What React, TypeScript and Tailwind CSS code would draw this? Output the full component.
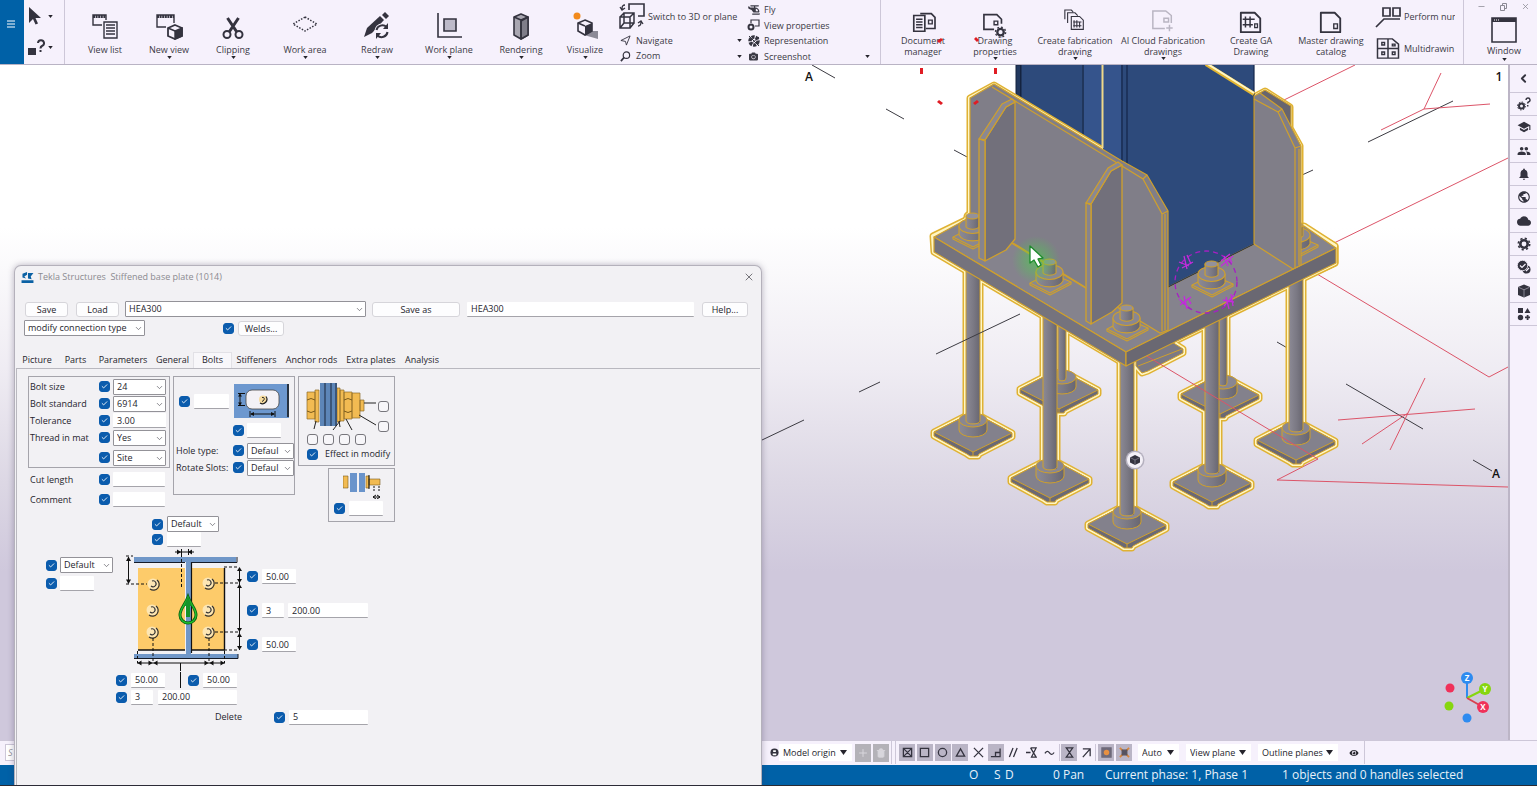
import React from "react";
import { MdSchool, MdGroup, MdNotifications, MdPublic, MdCloud, MdSettings } from "react-icons/md";
import { FaHelicopter, FaCamera, FaEye } from "react-icons/fa";
import { ChevronDown, ChevronLeft, Check, X, Minus, Trash2, Plus } from "lucide-react";

/* ---------- small shared controls ---------- */

function Arrow({ className = "" }: { className?: string }) {
  return (
    <svg viewBox="0 0 6 4" className={"h-[3px] w-[5px] fill-[#25242c] " + className}>
      <path d="M0 0h6L3 4z" />
    </svg>
  );
}

function Tick({ label, on = true }: { label: string; on?: boolean }) {
  return (
    <span className="grid h-[11px] w-[11px] shrink-0">
      <input
        type="checkbox"
        aria-label={label}
        defaultChecked={on}
        className="peer col-start-1 row-start-1 h-[11px] w-[11px] appearance-none rounded-[3px] border border-[#77767c] bg-[#f7f6f9] checked:border-[#0b5cad] checked:bg-[#0b5cad]"
      />
      <Check
        className="pointer-events-none col-start-1 row-start-1 m-auto hidden h-[7px] w-[7px] text-white peer-checked:block"
        strokeWidth={3}
      />
    </span>
  );
}

function Field({ label, value = "", className }: { label: string; value?: string; className: string }) {
  return (
    <input
      type="text"
      aria-label={label}
      defaultValue={value}
      className={"h-[15px] shrink-0 rounded-[1px] border-b border-[#a5a4aa] bg-white px-[4px] outline-none " + className}
    />
  );
}

function Pick({ label, value, className }: { label: string; value: string; className: string }) {
  return (
    <span className={"relative flex h-[16px] shrink-0 " + className}>
      <select
        aria-label={label}
        className="w-full appearance-none rounded-[1px] border border-[#939298] bg-white pl-[3px] outline-none"
      >
        <option>{value}</option>
      </select>
      <ChevronDown className="pointer-events-none absolute top-[4px] right-[2px] h-[9px] w-[9px] text-[#55545c]" strokeWidth={1.8} />
    </span>
  );
}

function PushButton({ children, className }: { children: string; className: string }) {
  return (
    <button type="button" className={"h-[15px] rounded-[3px] border border-[#d6d5da] bg-[#fdfdfe] text-center leading-[13px] " + className}>
      {children}
    </button>
  );
}

/* ---------- ribbon ---------- */

const ink = "#34333f";

const DocBase = () => <path d="M2 3h15l6 6v15H2z" fill="none" stroke={ink} strokeWidth="2" strokeLinejoin="round" />;

const icons: Record<string, React.ReactNode> = {
  viewList: (
    <g fill="none" stroke={ink} strokeWidth="1.4">
      <path d="M14 7V2H1v10h9" />
      <path d="M1 3.5h13" strokeWidth="3" strokeDasharray="2 .6" />
      <path d="M12 9h13v16H12z" fill="#f6f1fc" />
      <path d="M14 12h9M14 15h9M14 18h9M14 21h9" />
    </g>
  ),
  newView: (
    <g fill="none" stroke={ink} strokeWidth="1.4">
      <path d="M18 10V2H1v12h9" />
      <path d="M1 3.5h17" strokeWidth="3" strokeDasharray="2 .6" />
      <path d="M19 12l7 3v8l-7 3-7-3v-8z" fill="#f6f1fc" strokeWidth="1.8" />
      <path d="M19 18v8l7-3v-8z" fill={ink} />
      <path d="M12 15l7 3" />
    </g>
  ),
  clipping: (
    <g fill="none" stroke={ink} strokeWidth="2">
      <ellipse cx="7" cy="21.500" rx="3.500" ry="3.500" />
      <ellipse cx="19" cy="21.500" rx="3.500" ry="3.500" />
      <path d="M9.500 18.500L18.500 5M16.500 18.500L7.500 5" strokeWidth="3" />
    </g>
  ),
  workArea: <path d="M13 4L25 11 13 18 1 11z" fill="none" stroke={ink} strokeWidth="1.500" strokeDasharray="1.500 1.500" />,
  redraw: (
    <g fill={ink}>
      <path d="M0 24L3 15 16 3l4 4L8 20z" />
      <path d="M18 2l3-3 4 4-3 3z" />
      <circle cx="18" cy="18" r="7.500" fill="#f6f1fc" />
      <path d="M12.500 17a6 6 0 0 1 10-3M23.500 19a6 6 0 0 1-10 3.500" fill="none" stroke={ink} strokeWidth="2" />
      <path d="M24 10v6h-5zM12 26v-6h5z" />
    </g>
  ),
  workPlane: (
    <g fill="none" stroke={ink} strokeWidth="1.600">
      <path d="M2 0v24h24" />
      <path d="M8 6h12v12H8z" fill="#bdbac9" />
    </g>
  ),
  rendering: (
    <g stroke={ink} strokeWidth="1.600" strokeLinejoin="round">
      <path d="M6 4l7-3 7 3v18l-7 4-7-4z" fill="#a9a7b1" />
      <path d="M13 8l7-4v18l-7 4z" fill="#7f7d89" />
      <path d="M6 4l7 3 7-3M13 7v19" fill="none" />
    </g>
  ),
  visualize: (
    <g>
      <path d="M14 18h12v8L12 22z" fill="#8b8996" />
      <path d="M13 7l7 3v8l-7 4-7-4v-8z" fill="#f6f1fc" stroke={ink} strokeWidth="1.600" />
      <path d="M13 13l7-3v8l-7 4z" fill={ink} />
      <path d="M6 10l7 3" stroke={ink} strokeWidth="1.500" />
      <circle cx="5" cy="3" r="3.500" fill="#f28a1c" />
    </g>
  ),
  docManager: (
    <g>
      <path d="M10 4h12l4 4v12H16" fill="none" stroke={ink} strokeWidth="1.800" />
      <path d="M3 6h12v17H3z" fill="#f6f1fc" stroke={ink} strokeWidth="1.800" />
      <path d="M5.500 10h7M5.500 13h7M5.500 16h7M5.500 19h7" stroke={ink} strokeWidth="1.500" />
      <path d="M19 11h4v4h-4z" fill="none" stroke={ink} strokeWidth="1.500" />
    </g>
  ),
  drawingProps: (
    <g fill="none" stroke={ink} strokeWidth="1.800">
      <path d="M12 21H1V5h14l5 5v5" />
      <path d="M12 12h4v4h-4z" strokeWidth="1.500" />
      <circle cx="19" cy="24" r="3.500" strokeWidth="2.500" />
      <circle cx="19" cy="24" r="5.500" strokeWidth="1.500" strokeDasharray="2 2.300" />
    </g>
  ),
  createFab: (
    <g fill="none" stroke={ink} strokeWidth="1.200">
      <path d="M2 10V0h7l2 2M5 14V3h8l3 3" />
      <path d="M9 7h9l4 4v10H9z" />
      <path d="M12 11v8M15 11v8M18 13v6M11 13h9M11 17h9" />
    </g>
  ),
  aiCloud: (
    <g fill="none" stroke="#b9b5c2" strokeWidth="1.600">
      <path d="M15 20H2V1h14l6 5v8" />
      <path d="M14 9h5v4h-5zM20 16v7M16.500 19.500h7" />
    </g>
  ),
  createGa: (
    <g>
      <DocBase />
      <path d="M7 7v12M12 7v12M4 10h13M4 16h11" stroke={ink} strokeWidth="1.600" fill="none" />
      <path d="M17 15h3v4h-3z" fill="none" stroke={ink} strokeWidth="1.400" />
    </g>
  ),
  master: (
    <g>
      <DocBase />
      <path d="M16 15h4v5h-4z" fill="none" stroke={ink} strokeWidth="1.500" />
    </g>
  ),
  windowIcon: (
    <g>
      <path d="M1 1h24v24H1z" fill="none" stroke={ink} strokeWidth="1.600" />
      <path d="M1 1h24v4H1z" fill={ink} />
      <path d="M3 3h6" stroke="#fff" strokeDasharray="1 1" />
    </g>
  ),
};

function BigButton({ icon, label, width, arrow }: { icon: string; label: string[]; width: string; arrow?: boolean }) {
  const two = label.length > 1;
  return (
    <button type="button" className={"flex h-full shrink-0 flex-col items-center " + width}>
      <svg viewBox="0 0 26 26" className={"overflow-visible " + (two ? "mt-[10px] h-[24px] w-[24px]" : "mt-[13px] h-[26px] w-[26px]")}>
        {icons[icon]}
      </svg>
      <span className={two ? "mt-px leading-[11px] whitespace-nowrap" : "mt-[5px] leading-[12px] whitespace-nowrap"}>
        {label.map((l) => (
          <span key={l} className="block">
            {l}
          </span>
        ))}
      </span>
      {arrow && <Arrow />}
    </button>
  );
}

function LineButton({ icon, label, arrow }: { icon: React.ReactNode; label: string; arrow?: boolean }) {
  return (
    <button type="button" className="flex h-[16px] w-full items-center gap-[4px] text-left">
      <span className="flex w-[13px] justify-center">{icon}</span>
      <span className="flex-1 whitespace-nowrap">{label}</span>
      {arrow && <Arrow />}
    </button>
  );
}

function Ribbon() {
  return (
    <header className="relative flex h-[65px] shrink-0 overflow-hidden border-b border-[#b9b3c4] bg-[#f6f1fc] text-[9px] text-[#3b3a45]">
      <button type="button" aria-label="Menu" className="flex w-[24px] shrink-0 items-center justify-center bg-[#0061a7]">
        <svg viewBox="0 0 8 8" className="mr-[3px] mb-4 h-[8px] w-[8px]">
          <path d="M0 1h8M0 4h8M0 7h8" stroke="#fff" strokeWidth="1" />
        </svg>
      </button>
      <div className="flex w-[41px] shrink-0 flex-col gap-[14px] border-r border-[#cdc7d8] pt-[7px] pl-[4px]">
        <button type="button" aria-label="Select" className="flex items-center gap-[6px]">
          <svg viewBox="0 0 14 18" className="h-[18px] w-[14px]">
            <path d="M1 0v16l4-4 2.500 5.500 2.500-1L7.500 11H13z" fill={ink} />
          </svg>
          <Arrow />
        </button>
        <button type="button" aria-label="Inquire" className="flex items-center gap-[3px]">
          <svg viewBox="0 0 17 17" className="h-[17px] w-[17px]">
            <path d="M0 9h8v7H0z" fill={ink} />
            <path d="M10 4a3 3 0 1 1 4 3c-1 .5-1.500 1-1.500 2.500M12.500 11v2" fill="none" stroke={ink} strokeWidth="2" />
          </svg>
          <Arrow />
        </button>
      </div>
      <div className="flex shrink-0 pl-[8px]">
        <BigButton icon="viewList" label={["View list"]} width="w-[64px]" />
        <BigButton icon="newView" label={["New view"]} width="w-[64px]" arrow />
        <BigButton icon="clipping" label={["Clipping"]} width="w-[64px]" arrow />
        <BigButton icon="workArea" label={["Work area"]} width="w-[80px]" arrow />
        <BigButton icon="redraw" label={["Redraw"]} width="w-[64px]" arrow />
        <BigButton icon="workPlane" label={["Work plane"]} width="w-[80px]" arrow />
        <BigButton icon="rendering" label={["Rendering"]} width="w-[64px]" arrow />
        <BigButton icon="visualize" label={["Visualize"]} width="w-[64px]" arrow />
      </div>
      <div className="flex w-[125px] shrink-0 flex-col pl-[2px]">
        <button type="button" className="flex h-[33px] items-center gap-[3px] whitespace-nowrap">
          <svg viewBox="0 0 26 26" className="h-[26px] w-[26px] shrink-0" fill="none" stroke={ink} strokeWidth="1.600">
            <path d="M10 7V1h15v12h-6" />
            <path d="M1 14h10v11H1zM5 10h10v10H5zM1 14l4-4M11 14l4-4M11 25l4-5M1 25l4-5" strokeWidth="1.500" />
            <path d="M6 2C4 2 3 3 3 6M1 4l2 3 3-2M19 23c2 0 3-1 3-4M19 20l3-2 2 3" strokeWidth="1.300" />
          </svg>
          Switch to 3D or plane
        </button>
        <LineButton
          label="Navigate"
          arrow
          icon={
            <svg viewBox="0 0 12 12" className="h-[11px] w-[11px]">
              <path d="M1 6L11 1 7 11 6 7z" fill="none" stroke={ink} />
            </svg>
          }
        />
        <LineButton
          label="Zoom"
          arrow
          icon={
            <svg viewBox="0 0 12 12" className="h-[11px] w-[11px]">
              <circle cx="7" cy="4.500" r="3.500" fill="none" stroke={ink} strokeWidth="1.300" />
              <path d="M4.500 7L1 11" stroke={ink} strokeWidth="1.800" />
            </svg>
          }
        />
      </div>
      <div className="flex w-[139px] shrink-0 flex-col border-r border-[#cdc7d8] pt-[2px] pr-[10px] pl-[5px]">
        <LineButton label="Fly" icon={<FaHelicopter className="h-[10px] w-[12px]" />} />
        <LineButton
          label="View properties"
          icon={
            <svg viewBox="0 0 13 12" className="h-[12px] w-[13px]" fill="none" stroke={ink}>
              <path d="M4 4V1h8v6H8" strokeWidth="1.200" />
              <circle cx="4" cy="8" r="2.500" strokeWidth="2" />
            </svg>
          }
        />
        <LineButton
          label="Representation"
          icon={
            <svg viewBox="0 0 12 12" className="h-[12px] w-[12px]">
              <circle cx="6" cy="6" r="4" fill="none" stroke={ink} strokeWidth="3.500" strokeDasharray="3 1" />
              <path d="M1 1l10 10M11 2L2 10" stroke={ink} />
            </svg>
          }
        />
        <LineButton label="Screenshot" arrow icon={<FaCamera className="h-[9px] w-[11px]" />} />
      </div>
      <div className="flex min-w-0 shrink-0 pl-[6px]">
        <BigButton icon="docManager" label={["Document", "manager"]} width="w-[72px]" />
        <BigButton icon="drawingProps" label={["Drawing", "properties"]} width="w-[72px]" arrow />
        <BigButton icon="createFab" label={["Create fabrication", "drawing"]} width="w-[88px]" arrow />
        <BigButton icon="aiCloud" label={["AI Cloud Fabrication", "drawings"]} width="w-[88px]" arrow />
        <BigButton icon="createGa" label={["Create GA", "Drawing"]} width="w-[88px]" />
        <BigButton icon="master" label={["Master drawing", "catalog"]} width="w-[72px]" />
      </div>
      <div className="flex w-[88px] shrink-0 flex-col justify-between overflow-hidden pt-[6px] pb-[5px] pl-[8px]">
        <button type="button" className="flex items-center gap-[3px] whitespace-nowrap">
          <svg viewBox="0 0 26 22" className="h-[22px] w-[26px] shrink-0" fill="none" stroke={ink} strokeWidth="1.700">
            <path d="M8 2h7v8H8zM18 2h7v8h-7zM25 13H9l-8 8" />
          </svg>
          Perform num
        </button>
        <button type="button" className="flex items-center gap-[3px] whitespace-nowrap">
          <svg viewBox="0 0 26 24" className="h-[21px] w-[26px] shrink-0" fill="none" stroke={ink} strokeWidth="1.700">
            <path d="M1 1h17l7 6v16H1zM13 1v22M1 12h24" />
            <path d="M6 5h3v3H6zM18 7h3v2h-3zM6 16h3v3H6zM18 16h3v3h-3z" />
          </svg>
          Multidrawin
        </button>
      </div>
      <div className="ml-auto flex w-[74px] shrink-0 flex-col border-l border-[#cdc7d8] pl-[7px]">
        <div className="flex justify-between pt-[2px] pr-[7px] pl-[6px] text-[#8a8893]">
          <button type="button" aria-label="Minimize"><Minus className="h-[9px] w-[9px]" /></button>
          <button type="button" aria-label="Restore">
            <svg viewBox="0 0 9 9" className="h-[9px] w-[9px]" fill="none" stroke="currentColor">
              <path d="M1.500 3.500h4v5h-4zM3.500 3V1.500h4v5H6" />
            </svg>
          </button>
          <button type="button" aria-label="Close"><X className="h-[9px] w-[9px]" /></button>
        </div>
        <button type="button" className="mt-[6px] flex flex-col items-center">
          <svg viewBox="0 0 26 26" className="h-[26px] w-[26px]">{icons.windowIcon}</svg>
          <span className="mt-[2px] leading-[12px]">Window</span>
          <Arrow className="mt-px" />
        </button>
      </div>
    </header>
  );
}

/* ---------- model view ---------- */

const gold = "#cfa02c";

const feet = {
  back: [
    { x: 1059, y: 391, top: 310, w: 8 },
    { x: 1220, y: 396, top: 310, w: 8 },
  ],
  front: [
    { x: 973, y: 434, top: 262, w: 14 },
    { x: 1050, y: 480, top: 306, w: 14 },
    { x: 1212, y: 484, top: 312, w: 14 },
    { x: 1296, y: 442, top: 268, w: 14 },
    { x: 1127, y: 526, top: 356, w: 14 },
  ],
};

type Foot = { x: number; y: number; top: number; w: number };

const footOutline = (f: Foot) =>
  `M${f.x - 39} ${f.y - 2}L${f.x} ${f.y - 22}L${f.x + 39} ${f.y - 1}V${f.y + 3}L${f.x + 6} ${f.y + 20}L${f.x + 5} ${f.y + 22}H${f.x - 3}L${f.x - 6} ${f.y + 20}L${f.x - 39} ${f.y + 2}z`;
const rodOutline = (f: Foot, dx = 0) => `M${f.x + dx - f.w / 2} ${f.top}h${f.w}V${f.y - 11}h${-f.w}z`;

const silhouettes = [
  ...feet.back.map(footOutline),
  ...feet.back.map((f) => rodOutline(f, 3)),
  ...feet.front.map(footOutline),
  ...feet.front.map((f) => rodOutline(f)),
  "M933 236L970 218V98L994 85L1126 164V330L1300 226L1335 246V263L1126 365L934 252z",
  "M1254 97L1265 91L1290 107V128L1300 146V226L1304 226L1335 246V263L1254 300z",
  "M967 217c0-5 13-5 13 0V240H960z",
  "M1136 356L1172 342L1183 349V353L1148 371L1142 373L1136 366z",
];

function FootShape({ f, dx = 0 }: { f: Foot; dx?: number }) {
  const { x, y } = f;
  return (
    <g stroke={gold} strokeWidth="1" strokeLinejoin="round">
      <path d={footOutline(f)} fill="#6b6974" />
      <path d={`M${x - 39} ${y - 2}L${x} ${y - 22}L${x + 39} ${y - 1}L${x} ${y + 18}z`} fill="#83818c" />
      <path d={`M${x} ${y + 18}v4`} />
      <path d={`M${x + dx - 14} ${y - 14}v10a14 7 0 0 0 28 0v-10z`} fill="url(#steel)" />
      <ellipse cx={x + dx} cy={y - 14} rx="14" ry="7" fill="#898792" />
      <path d={rodOutline(f, dx)} fill="url(#steel)" stroke="none" />
      <path d={`M${x + dx - f.w / 2} ${f.top}V${y - 13}a${f.w / 2} 3 0 0 0 ${f.w} 0V${f.top}`} fill="none" />
    </g>
  );
}

function Bolt({ x, y }: { x: number; y: number }) {
  return (
    <g stroke={gold} strokeWidth="1.100" strokeLinejoin="round">
      <path d={`M${x - 20} ${y - 1}L${x} ${y - 11}L${x + 21} ${y - 2}L${x} ${y + 9}z`} fill="#898792" />
      <path d={`M${x - 20} ${y - 1}v2L${x} ${y + 11}L${x + 21} ${y}v-2`} fill="none" />
      <path d={`M${x - 14} ${y - 12}v9a14 8 0 0 0 27 0v-9z`} fill="url(#steel)" />
      <ellipse cx={x - 0.5} cy={y - 12} rx="13.500" ry="7.500" fill="#898792" />
      <path d={`M${x - 7} ${y - 22}v11a7 3.500 0 0 0 13 0v-11z`} fill="url(#steel)" />
      <ellipse cx={x - 0.5} cy={y - 22} rx="6.500" ry="3" fill="#93919b" />
    </g>
  );
}

function ModelView() {
  return (
    <svg
      viewBox="0 65 1508 675"
      preserveAspectRatio="xMinYMin slice"
      className="h-full w-full"
      fontFamily='"Open Sans", "Liberation Sans", sans-serif'
    >
      <defs>
        <linearGradient id="steel" x1="0" x2="1" y1="0" y2="0">
          <stop offset="0" stopColor="#8c8a95" />
          <stop offset="0.55" stopColor="#7a7883" />
          <stop offset="1" stopColor="#686670" />
        </linearGradient>
        <linearGradient id="sky" x1="0" x2="0" y1="0" y2="1">
          <stop offset="0.24" stopColor="#ffffff" />
          <stop offset="0.45" stopColor="#efecf3" />
          <stop offset="0.62" stopColor="#dcd7e4" />
          <stop offset="0.75" stopColor="#cfc8dc" />
        </linearGradient>
        <radialGradient id="glow">
          <stop offset="0" stopColor="#3fe03f" stopOpacity="0.550" />
          <stop offset="1" stopColor="#3fe03f" stopOpacity="0" />
        </radialGradient>
      </defs>
      <rect x="0" y="65" width="1508" height="675" fill="url(#sky)" />

      <g stroke="#3c3b42" strokeWidth="1" fill="none">
        <path d="M812 65L835 78M886 109L904 119M954 150L969 158M1302 175L1313 170M1368 142L1453 101" />
        <path d="M859 392L880 382M762 440L804 420M1277 342L1296 353M1346 384L1423 429M1473 460L1492 471" />
      </g>
      <g stroke="#dc5468" strokeWidth="1" fill="none">
        <path d="M1284 100L1355 65M1334 243L1508 158M1317 274L1489 377L1508 367" />
        <path d="M1381 130L1424 109L1441 73M1424 109L1490 104" />
        <path d="M1425 378L1390 450M1338 420L1475 409M1362 444L1408 413" />
        <path d="M1318 459L1277 480L1508 487" />
      </g>

      <path d="M1016 65H1254V244L1168 287L1016 200z" fill="#2d4a7b" />
      <path d="M1016 65h5V100h-5zM1020.500 65V100M1083 65V140" fill="#22385f" stroke="#14233f" />
      <path d="M1084 65H1102V150H1084z" fill="#35548c" />

      <g fill="none" strokeLinejoin="round">
        {silhouettes.map((d) => <path key={d} d={d} stroke="#e0b233" strokeWidth="7" />)}
        {silhouettes.map((d) => <path key={d} d={d} stroke="#fff6c4" strokeWidth="4" />)}
      </g>

      <path d="M1103 65H1254V244L1150 296L1103 200z" fill="#2d4a7b" />
      <path d="M1103 65H1121V165H1103z" fill="#35548c" />
      <path d="M1102.500 65V148" stroke="#efd98a" strokeWidth="2" />
      <path d="M1122 65V162M1127 65V164M1254 65V244" stroke="#15264a" strokeWidth="1.200" />
      <path d="M1206 64L1254 94" stroke="#e3b632" strokeWidth="4" />
      <path d="M1206 63L1254 93" stroke="#fff6c4" strokeWidth="2" />

      <path d="M1136 356L1172 342L1183 349V353L1148 371L1142 373L1136 366z" fill="#7b7984" stroke={gold} />
      <path d="M1138 366L1182 349" stroke={gold} />
      {feet.back.map((f) => <FootShape key={f.x} f={f} dx={3} />)}
      {feet.front.map((f) => <FootShape key={f.x} f={f} />)}
      <path d="M1145 355L1318 459" stroke="#dc5468" />
      <path d="M936 354L1020 314" stroke="#3c3b42" />

      <g stroke={gold} strokeWidth="1.200" strokeLinejoin="round">
        <path d="M934 237L969 218L1168 287L1254 244L1304 226L1336 248L1126 352z" fill="#85838d" />
        <path d="M934 237L1126 352V366L934 252z" fill="#75737d" />
        <path d="M1336 248L1126 352V366L1336 263z" fill="#6a6872" />
      </g>
      <path d="M1168 286L1254 243V200H1168z" fill="#2d4a7b" />
      <path d="M1254 200V244L1168 287" stroke="#15264a" fill="none" />

      <Bolt x={1297} y={247} />
      <g stroke={gold} strokeWidth="1.200" strokeLinejoin="round">
        <path d="M1258 94L1265 90L1291 106V132L1280 118z" fill="#67656f" />
        <path d="M1254 96L1260 93L1282 109L1301 146V265L1293 269L1254 244z" fill="#807e88" />
        <path d="M1254 99L1278 112L1295 148V268M1278 112L1282 109M1295 148L1301 146M1299 149V265" fill="none" />
      </g>

      <path
        d="M970 98L994 84L1122 161L1147 175L1168 211V330L1160 333L970 218z"
        fill="#807e88"
        stroke={gold}
        strokeWidth="1.200"
      />
      <path d="M992 87L1122 166L1143 179L1162 214V331M1143 179L1147 175M1162 214L1168 211M1165 214V330" fill="none" stroke={gold} strokeWidth="1.200" />
      <Bolt x={973} y={238} />
      <g stroke={gold} strokeWidth="1.300" strokeLinejoin="round">
        <path d="M985 140L1006 107L1015 102V239L1006 250L985 261z" fill="#72707b" />
        <path d="M979 139L1002 104L1012 99L1015 102L1006 107L985 140z" fill="#8a8893" />
        <path d="M979 139L985 141V261L979 258z" fill="#86848e" />
        <path d="M1091 204L1111 171L1122 165V303L1112 312L1091 324z" fill="#72707b" />
        <path d="M1086 203L1108 168L1118 162L1122 165L1111 171L1091 204z" fill="#8a8893" />
        <path d="M1086 203L1091 205V324L1086 321z" fill="#86848e" />
        <path d="M1013 243L1085 287" />
      </g>
      <Bolt x={1050} y={284} />
      <Bolt x={1127} y={330} />
      <Bolt x={1212} y={286} />

      <circle cx="1206" cy="282" r="31" fill="none" stroke="#a61fc4" strokeWidth="1.300" strokeDasharray="5 4" />
      <path
        d="M1179 262l10 4M1184 256l3 13M1187 255l4 9M1182 268l11-6M1221 266l12-10M1221 261l9-7M1224 256l4 10M1229 257l3 6M1179 299l9 8M1180 305l11-8M1184 296l3 13M1188 298l3 6M1223 300l11 2M1224 306l10-11M1226 297l3 12M1231 294l2 12"
        fill="none"
        stroke="#c42bdc"
        strokeWidth="1.300"
      />

      <g fill="#e01c24">
        <path d="M920 68h3v6h-3zM994 68h3v6h-3zM937 102l2-2 4 3-2 2zM973 103l4-3 2 2-4 3z" />
      </g>

      <circle cx="1036" cy="260" r="24" fill="url(#glow)" />
      <path d="M1030 246V263L1034 260L1038 267L1041 265L1038 259L1043 258z" fill="#fff" stroke="#1d8a2c" strokeWidth="1.300" strokeLinejoin="round" />

      <circle cx="1135" cy="460" r="9.500" fill="#b5b1bf" />
      <circle cx="1135" cy="460" r="8" fill="#f4f1f8" />
      <path d="M1135 455l5 2.500v5L1135 465l-5-2.500v-5z" fill={ink} />
      <path d="M1130 457.500l5 2.500l5-2.500M1135 460v5" stroke="#8d8a98" strokeWidth="0.700" fill="none" />

      <g fontSize="12" fontWeight="600" fill="#111" textAnchor="middle">
        <text x="809" y="81">A</text>
        <text x="1499" y="81">1</text>
        <text x="1496" y="478">A</text>
      </g>

      <g strokeWidth="2">
        <path d="M1467 698V678" stroke="#2e8bf0" />
        <path d="M1467 698L1485 689" stroke="#86d60f" />
        <path d="M1467 698L1483 707" stroke="#d8404f" />
      </g>
      <circle cx="1450" cy="688" r="4.500" fill="#f0315a" />
      <circle cx="1449" cy="706" r="4.500" fill="#86d60f" />
      <circle cx="1467" cy="718" r="4.500" fill="#2e8bf0" />
      <circle cx="1467" cy="678" r="6" fill="#2e8bf0" />
      <circle cx="1485" cy="689" r="6" fill="#86d60f" />
      <circle cx="1483" cy="707" r="6" fill="#f0315a" />
      <g fontSize="8" fontWeight="700" fill="#fff" textAnchor="middle">
        <text x="1467" y="681">Z</text>
        <text x="1485" y="692">Y</text>
        <text x="1483" y="710">X</text>
      </g>
    </svg>
  );
}

function SidePane() {
  const cls = "h-[14px] w-[14px]";
  const items: [string, React.ReactNode][] = [
    [
      "Properties",
      <svg viewBox="0 0 14 14" className="h-[14px] w-[14px]" fill="none" stroke="currentColor">
        <circle cx="4.500" cy="9" r="2.500" strokeWidth="2" />
        <circle cx="4.500" cy="9" r="4" strokeWidth="1" strokeDasharray="1.500 1.600" />
        <path d="M9 3a2 2 0 1 1 2.500 2c-.7.300-.8.700-.8 1.500M10.700 8v1.500" strokeWidth="1.500" />
      </svg>,
    ],
    ["Learning", <MdSchool className={cls} />],
    ["Community", <MdGroup className={cls} />],
    ["Notifications", <MdNotifications className={cls} />],
    ["Online", <MdPublic className={cls} />],
    ["Cloud", <MdCloud className={cls} />],
    [
      "Settings",
      <svg viewBox="0 0 14 14" className={cls} fill="none" stroke="currentColor">
        <circle cx="7" cy="7" r="3.700" strokeWidth="2.600" />
        <circle cx="7" cy="7" r="5.700" strokeWidth="1.600" strokeDasharray="2.200 2.280" />
      </svg>,
    ],
    [
      "Checks",
      <svg viewBox="0 0 14 14" className="h-[14px] w-[14px]">
        <circle cx="9.500" cy="9.500" r="4" fill="currentColor" />
        <circle cx="5.500" cy="5.500" r="5.200" fill="currentColor" stroke="#f6f1fc" strokeWidth="0.800" />
        <path d="M3 5.500l2 2 3.500-3.500M9 11l3-3" fill="none" stroke="#f6f1fc" strokeWidth="1.200" />
      </svg>,
    ],
    [
      "Model",
      <svg viewBox="0 0 14 14" className={cls}>
        <path d="M7 0.500l6 2.500v8L7 13.500 1 11V3z" fill="currentColor" />
        <path d="M1.500 3.300L7 5.800l5.500-2.500M7 5.800v7.500" fill="none" stroke="#aaa6b5" strokeWidth="0.700" />
      </svg>,
    ],
    [
      "Components",
      <svg viewBox="0 0 14 14" className={cls} fill="currentColor">
        <path d="M1 1h5v5H1zM10.500 1l3 5h-6z" />
        <circle cx="3.500" cy="10.500" r="2.700" />
        <path d="M8 9.500h1.700V8h1.800v1.500H13v1.800h-1.500V13H9.700v-1.700H8z" />
      </svg>,
    ],
  ];
  return (
    <aside className="flex w-[29px] shrink-0 flex-col border-l-2 border-[#bcb5c6] bg-[#f6f1fc] text-[#34333f]">
      <button type="button" aria-label="Collapse" className="flex h-[28px] items-center justify-center border-b border-[#cdc7d8]">
        <ChevronLeft className="h-[13px] w-[13px]" strokeWidth={3.500} />
      </button>
      <div className="grid h-[233px] grid-rows-10">
        {items.map(([name, icon]) => (
          <button key={name} type="button" aria-label={name} className="flex items-center justify-center border-b border-[#cdc7d8]">
            {icon}
          </button>
        ))}
      </div>
    </aside>
  );
}

/* ---------- dialog ---------- */

const tabs: [string, string][] = [
  ["Picture", "w-[40px]"],
  ["Parts", "w-[37px]"],
  ["Parameters", "w-[58px]"],
  ["General", "w-[41px]"],
  ["Bolts", "w-[39px]"],
  ["Stiffeners", "w-[49px]"],
  ["Anchor rods", "w-[61px]"],
  ["Extra plates", "w-[58px]"],
  ["Analysis", "w-[44px]"],
];

function SlotPicture() {
  return (
    <svg viewBox="0 0 55 34" className="h-[34px] w-[55px] shrink-0">
      <path d="M0 0h55v34H0z" fill="#6d98cf" />
      <path d="M54 0v33" stroke="#111" strokeWidth="1.500" />
      <rect x="12" y="6" width="33" height="19" rx="6" fill="#f3f1f6" stroke="#444" strokeWidth="0.800" />
      <circle cx="29" cy="15.500" r="4" fill="#f7dca0" />
      <path d="M32 12.500a4.500 4.500 0 0 1-6 6.500" fill="none" stroke="#222" strokeWidth="1.200" />
      <path d="M28 13.500c3-1 3 3 0 4" fill="none" stroke="#222" />
      <path d="M6 9.500v12M4 9.500h7M4 21.500h7M17 30h23M16 27v6M41 27v6" stroke="#111" fill="none" />
      <path d="M16 30l4-2v4zM41 30l-4-2v4zM6 9.500l-2 3h4zM6 21.500l-2-3h4z" fill="#111" />
    </svg>
  );
}

function AssemblyPicture() {
  return (
    <svg viewBox="0 0 72 49" className="h-[49px] w-[72px] shrink-0">
      <g fill="#f2bb52" stroke="#8d6a28" strokeWidth="0.700">
        <path d="M1 9h8v27H1zM9 7h4v32H9z" />
        <path d="M31 5h3v34h-3zM34 7h4v31h-4zM38 9h8v27h-8zM46 10h8v25h-8zM54 17h4v11h-4z" />
      </g>
      <path d="M1 17q4-3 8 0M1 28q4 3 8 0M38 17q4-3 8 0M38 28q4 3 8 0" fill="none" stroke="#7a5a1c" />
      <path d="M14 0h17v43H14z" fill="#5d86b8" />
      <path d="M19 0v43M25 0v43M30 0v43" stroke="#26364f" strokeWidth="1.200" />
      <path d="M10 38l-2 8M34 38l-7 9M33 38l1 6M40 36l6 11M53 32l17 10M58 20h12" stroke="#222" fill="none" />
    </svg>
  );
}

function ThreadPicture() {
  return (
    <svg viewBox="0 0 38 26" className="h-[26px] w-[38px]">
      <path d="M0 3h5v12H0zM23 3h3v12h-3zM26 6h11v6H26z" fill="#f2bb52" stroke="#7a5a1c" strokeWidth="0.600" />
      <path d="M7 0h7v19H7zM16 0h6v19h-6z" fill="#6a94cb" />
      <path d="M26 2v14" stroke="#111" />
      <path d="M31 13v6M36 13v6" stroke="#111" strokeDasharray="2 1" />
      <path d="M30 24h7M33 22l-3 2 3 2M34 22l3 2-3 2" stroke="#111" fill="none" />
    </svg>
  );
}

function ProfilePicture() {
  const heads = [
    [28, 37], [27, 63], [27, 85], [83, 36], [83, 63], [83, 85],
  ];
  return (
    <svg viewBox="0 0 118 124" className="h-[124px] w-[118px] shrink-0">
      <path d="M13 21h47v82H13zM66 21h33v82H66z" fill="#fdcb6a" />
      <path d="M99.500 21v82M13 103h47M66 103h34" stroke="#111" strokeWidth="1.400" />
      <path d="M9 10h102v5H9zM61 15h5v81h-5zM9 107h104v4H9zM61 96h5v12h-5z" fill="#7097c8" />
      <path d="M66.500 15v91" stroke="#111" strokeWidth="1.200" />
      <path d="M9 15.500h51M66 15.500h46V10M9 111.500h104V107" stroke="#151b28" fill="none" />
      {heads.map(([x, y]) => (
        <g key={`${x}-${y}`}>
          <circle cx={x} cy={y} r="5.500" fill="#fde6b4" />
          <path d={`M${x + 4} ${y - 4}a5.500 5.500 0 0 1-7 9`} fill="none" stroke="#333" strokeWidth="1.200" />
          <path d={`M${x - 1} ${y - 3}a3 3 0 1 1-1 5`} fill="none" stroke="#333" strokeWidth="1.100" />
        </g>
      ))}
      <g stroke="#111" strokeDasharray="3 2" fill="none">
        <path d="M56.500 2v38M1 37h21M1 9h7M90 36h24M90 85h24M99 20h15M99 103h15M28 91v24M84 91v24M12.500 104v12M99.500 104v12" />
      </g>
      <g stroke="#111" fill="none">
        <path d="M50 5h19M3.500 10v26M114.500 21v82M12 116h88M55.500 116v8M56.500 2v6M63.500 2v6" />
      </g>
      <path
        d="M56 5l-4-2.500v5zM63 5l4-2.500v5zM3.500 9.500l-2.500 4.500h5zM3.500 37l-2.500-4.500h5zM114.500 20l-2.500 4h5zM114.500 36l-2.500-4h5zM114.500 37l-2.500 4h5zM114.500 85l-2.500-4h5zM114.500 86l-2.500 4h5zM114.500 103l-2.500-4h5zM12.500 116l4-2.500v5zM27.500 116l-4-2.500v5zM28.500 116l4-2.500v5zM83.500 116l-4-2.500v5zM84.500 116l4-2.500v5zM99.500 116l-4-2.500v5z"
        fill="#111"
      />
      <path d="M63 50c3 8 8 12 8 18a8 8 0 0 1-16 0c0-6 5-10 8-18z" fill="none" stroke="#0b5b12" strokeWidth="3" />
      <path d="M63 50c3 8 8 12 8 18a8 8 0 0 1-16 0c0-6 5-10 8-18z" fill="none" stroke="#1fc12c" strokeWidth="1.400" />
      <path d="M63 49l4 10h-2v11h-4V59h-2z" fill="#17932a" />
    </svg>
  );
}

function BoltRow({ label, control, className = "" }: { label: string; control: React.ReactNode; className?: string }) {
  return (
    <div className={"flex h-[17px] items-center " + className}>
      <span className="w-[69px] whitespace-nowrap">{label}</span>
      <Tick label={"Use " + (label || "workshop or site")} />
      <span className="ml-[3px] flex">{control}</span>
    </div>
  );
}

function BoltsPanel() {
  return (
    <section className="flex-1 border-t border-l border-[#b9b8bf] pt-[7px] pl-[11px]">
      <div className="flex items-start gap-[3px]">
        <div className="w-[267px]">
          <div className="flex items-start gap-[3px]">
            <div className="w-[142px] shrink-0">
              <div className="border border-[#a5a4ab] pt-px pb-px pl-px">
                <BoltRow label="Bolt size" control={<Pick label="Bolt size" value="24" className="w-[53px]" />} />
                <BoltRow label="Bolt standard" control={<Pick label="Bolt standard" value="6914" className="w-[53px]" />} />
                <BoltRow label="Tolerance" control={<Field label="Tolerance" value="3.00" className="w-[53px]" />} />
                <BoltRow label="Thread in mat" control={<Pick label="Thread in mat" value="Yes" className="w-[53px]" />} />
                <BoltRow className="mt-[3px]" label="" control={<Pick label="Site or workshop" value="Site" className="w-[53px]" />} />
              </div>
              <div className="mt-[3px] flex flex-col gap-[3px] pl-[2px]">
                <BoltRow label="Cut length" control={<Field label="Cut length" className="w-[52px]" />} />
                <BoltRow label="Comment" control={<Field label="Comment" className="w-[52px]" />} />
              </div>
            </div>
            <div className="h-[119px] w-[122px] shrink-0 border border-[#a5a4ab] pt-[7px]">
              <div className="flex items-center pl-[5px]">
                <Tick label="Use slotted hole height" />
                <Field label="Slotted hole height" className="mr-[5px] ml-[4px] w-[35px]" />
                <SlotPicture />
              </div>
              <div className="mt-[4px] flex h-[17px] items-center pl-[59px]">
                <Tick label="Use slotted hole width" />
                <Field label="Slotted hole width" className="ml-[3px] w-[34px]" />
              </div>
              <div className="mt-[3px] flex h-[17px] items-center pl-[2px]">
                <span className="w-[57px]">Hole type:</span>
                <Tick label="Use hole type" />
                <Pick label="Hole type" value="Defaul" className="ml-[3px] w-[47px]" />
              </div>
              <div className="flex h-[17px] items-center pl-[2px]">
                <span className="w-[57px] whitespace-nowrap">Rotate Slots:</span>
                <Tick label="Use rotate slots" />
                <Pick label="Rotate slots" value="Defaul" className="ml-[3px] w-[47px]" />
              </div>
            </div>
          </div>
          <div className="mt-[8px] flex flex-col pl-[124px]">
            <div className="flex h-[16px] items-center gap-[4px]">
              <Tick label="Use horizontal reference" />
              <Pick label="Horizontal reference" value="Default" className="w-[52px]" />
            </div>
            <div className="flex h-[15px] items-center gap-[4px]">
              <Tick label="Use horizontal offset" />
              <Field label="Horizontal offset" className="w-[34px]" />
            </div>
          </div>
        </div>
        <div className="flex w-[97px] flex-col items-end gap-[2px]">
          <div className="h-[90px] w-full border border-[#a5a4ab] pt-[6px]">
            <div className="flex pl-[7px]">
              <AssemblyPicture />
              <div className="mt-[18px] flex flex-col gap-[9px]">
                <Tick label="Bolt end" on={false} />
                <Tick label="Second nut" on={false} />
              </div>
            </div>
            <div className="mt-[2px] flex gap-[5px] pl-[8px]">
              <Tick label="Bolt" on={false} />
              <Tick label="Washer 1" on={false} />
              <Tick label="Washer 2" on={false} />
              <Tick label="Washer 3" on={false} />
            </div>
            <label className="mt-[2px] flex h-[14px] items-center gap-[7px] pl-[8px] whitespace-nowrap">
              <Tick label="Effect in modify" />
              Effect in modify
            </label>
          </div>
          <div className="h-[54px] w-[67px] border border-[#a5a4ab] pt-[4px]">
            <div className="pl-[14px]">
              <ThreadPicture />
            </div>
            <div className="mt-[2px] flex items-center gap-[4px] pl-[5px]">
              <Tick label="Use extra length" />
              <Field label="Extra length" className="w-[34px]" />
            </div>
          </div>
        </div>
      </div>

      <div className="flex items-start">
        <div className="flex w-[97px] flex-col gap-[3px] pt-[10px] pl-[18px]">
          <div className="flex items-center gap-[3px]">
            <Tick label="Use vertical reference" />
            <Pick label="Vertical reference" value="Default" className="w-[53px]" />
          </div>
          <div className="flex items-center gap-[3px]">
            <Tick label="Use vertical offset" />
            <Field label="Vertical offset" className="w-[34px]" />
          </div>
        </div>
        <ProfilePicture />
        <div className="ml-[4px] flex flex-col gap-[19px] pt-[22px]">
          <div className="flex items-center gap-[4px]">
            <Tick label="Use top edge distance" />
            <Field label="Top edge distance" value="50.00" className="w-[34px]" />
          </div>
          <div className="flex items-center gap-[4px]">
            <Tick label="Use vertical bolts" />
            <Field label="Vertical bolt count" value="3" className="w-[22px]" />
            <Field label="Vertical bolt spacing" value="200.00" className="w-[80px]" />
          </div>
          <div className="flex items-center gap-[4px]">
            <Tick label="Use bottom edge distance" />
            <Field label="Bottom edge distance" value="50.00" className="w-[34px]" />
          </div>
        </div>
      </div>

      <div className="mt-px flex flex-col gap-[1px] pl-[88px]">
        <div className="flex h-[16px] items-center">
          <Tick label="Use left edge distance" />
          <Field label="Left edge distance" value="50.00" className="ml-[4px] w-[34px]" />
          <span className="mr-[7px] ml-[15px] h-full w-px bg-[#111]" />
          <Tick label="Use right edge distance" />
          <Field label="Right edge distance" value="50.00" className="ml-[4px] w-[34px]" />
        </div>
        <div className="flex h-[16px] items-center">
          <Tick label="Use horizontal bolts" />
          <Field label="Horizontal bolt count" value="3" className="ml-[4px] w-[22px]" />
          <Field label="Horizontal bolt spacing" value="200.00" className="ml-[5px] w-[79px]" />
        </div>
      </div>
      <div className="mt-[4px] flex h-[16px] items-center pl-[187px]">
        <label htmlFor="delete-bolts" className="w-[59px]">Delete</label>
        <Tick label="Use delete" />
        <input
          id="delete-bolts"
          type="text"
          defaultValue="5"
          className="ml-[4px] h-[15px] w-[79px] rounded-[1px] border-b border-[#a5a4aa] bg-white px-[4px] outline-none"
        />
      </div>
    </section>
  );
}

function ConnectionDialog() {
  return (
    <div
      role="dialog"
      aria-label="Stiffened base plate"
      className="absolute top-[265px] bottom-px left-[14px] flex w-[748px] flex-col overflow-hidden rounded-t-[7px] border border-b-0 border-[#b4b1bb] bg-[#f2f1f4] text-[9px] leading-[12px] text-[#25242c] shadow-[0_0_6px_rgba(60,50,80,0.35)]"
    >
      <div className="flex h-[22px] items-center pr-[6px] pl-[6px]">
        <svg viewBox="0 0 13 12" className="h-[11px] w-[13px]">
          <path d="M0 9h13v3H0zM1 2l5-2v3l-3 2 2 2-4-1zM7 1h6l-3 4 1 3-4-1z" fill="#0b61a4" />
        </svg>
        <h1 className="ml-[4px] flex-1 whitespace-pre text-[#8b8a90]">Tekla Structures  Stiffened base plate (1014)</h1>
        <button type="button" aria-label="Close dialog">
          <X className="h-[12px] w-[12px] text-[#77767c]" strokeWidth={2} />
        </button>
      </div>
      <div className="mt-[13px] flex h-[16px] items-center pl-[10px]">
        <PushButton className="w-[43px]">Save</PushButton>
        <PushButton className="ml-[8px] w-[43px]">Load</PushButton>
        <Pick label="Saved settings" value="HEA300" className="ml-[6px] w-[241px]" />
        <PushButton className="ml-[6px] w-[88px]">Save as</PushButton>
        <Field label="Settings name" value="HEA300" className="ml-[7px] w-[227px]" />
        <PushButton className="ml-[8px] w-[46px]">Help...</PushButton>
      </div>
      <div className="mt-[3px] flex h-[16px] items-center pl-[9px]">
        <Pick label="Modify mode" value="modify connection type" className="w-[121px]" />
        <span className="ml-[78px] flex items-center gap-[4px]">
          <Tick label="Use welds" />
          <PushButton className="w-[46px]">Welds...</PushButton>
        </span>
      </div>
      <div className="mt-[16px] -mb-px flex h-[17px] items-end pl-[2px]" role="tablist">
        {tabs.map(([name, width]) => (
          <button
            key={name}
            type="button"
            role="tab"
            aria-selected={name === "Bolts"}
            className={
              "pb-[2px] text-center whitespace-nowrap " +
              width +
              (name === "Bolts" ? " h-[17px] border-x border-t border-[#e2e1e6] bg-[#f8f7fa]" : " h-[16px]")
            }
          >
            {name}
          </button>
        ))}
      </div>
      <div className="flex flex-1 px-px">
        <BoltsPanel />
      </div>
    </div>
  );
}

/* ---------- bottom bars ---------- */

function Drop({ label, value, className }: { label: string; value: string; className: string }) {
  return (
    <span className={"relative flex h-[17px] shrink-0 items-center bg-white " + className}>
      <select aria-label={label} className="h-full w-full appearance-none bg-transparent pl-[4px] outline-none">
        <option>{value}</option>
      </select>
      <svg viewBox="0 0 7 5" className="pointer-events-none absolute right-[5px] h-[5px] w-[7px] fill-[#25242c]">
        <path d="M0 0h7L3.500 5z" />
      </svg>
    </span>
  );
}

function SnapButton({ label, on, d, children }: { label: string; on?: boolean; d?: string; children?: React.ReactNode }) {
  return (
    <button
      type="button"
      aria-label={label}
      className={"flex h-[17px] w-[16px] shrink-0 items-center justify-center " + (on ? "bg-[#bab5c6]" : "")}
    >
      <svg viewBox="0 0 12 12" className="h-[11px] w-[11px]" fill="none" stroke={ink} strokeWidth="1.400">
        {d && <path d={d} />}
        {children}
      </svg>
    </button>
  );
}

function SnapBar() {
  return (
    <div className="flex h-[25px] shrink-0 items-center border-t border-[#cdc7d8] bg-[#f6f1fc] pb-px text-[9px] text-[#25242c]">
      <div className="flex w-[762px] shrink-0 items-center pl-[5px]">
        <input
          aria-label="Quick search"
          placeholder="S"
          className="h-[17px] w-[200px] border border-[#cdc7d8] bg-white px-[2px] italic outline-none"
        />
      </div>
      <div className="flex h-full w-[130px] shrink-0 items-center border-r border-[#cdc7d8] pl-[8px]">
        <svg viewBox="0 0 10 10" className="h-[9px] w-[9px]">
          <circle cx="5" cy="5" r="4.500" fill={ink} />
          <path d="M3.500 2.500h3v2h-3zM3 6h4v2H3z" fill="#fff" />
        </svg>
        <Drop label="Work plane" value="Model origin" className="w-[73px]" />
        <button type="button" aria-label="Add plane" className="ml-[3px] flex h-[18px] w-[16px] items-center justify-center bg-[#b4b2b8] text-[#d8d6dc]">
          <Plus className="h-[12px] w-[12px]" />
        </button>
        <button type="button" aria-label="Delete plane" className="ml-[2px] flex h-[18px] w-[16px] items-center justify-center bg-[#b4b2b8] text-[#d8d6dc]">
          <Trash2 className="h-[10px] w-[10px]" fill="currentColor" />
        </button>
      </div>
      <div className="ml-[3px] flex h-full shrink-0 items-center border-x border-[#cdc7d8] pr-[2px] pl-[3px]">
        <div className="flex w-[158px] justify-between">
          <SnapButton label="Reference points" on d="M1.500 1.500h9v9h-9zM1.500 1.500l9 9M10.500 1.500l-9 9" />
          <SnapButton label="End points" on d="M1.500 1.500h9v9h-9z" />
          <SnapButton label="Centers" on><circle cx="6" cy="6" r="4.500" /></SnapButton>
          <SnapButton label="Midpoints" on d="M6 2l4.500 8h-9z" />
          <SnapButton label="Intersections" d="M1 1l10 10M11 1L1 11" />
          <SnapButton label="Perpendicular" on d="M1 10.500h10V1.500M6 10V6h5" />
          <SnapButton label="Extensions" d="M1.500 11l4-10M6 11l4-10" />
          <SnapButton label="Any position" d="M0 6h5M5 1h6L6 11h5L5 1" />
          <SnapButton label="Nearest points" d="M1 7q2.500-4 5-.500t5-.500" />
        </div>
        <div className="ml-[2px] flex w-[37px] justify-between border-x border-[#cdc7d8] px-px">
          <SnapButton label="Geometry lines" on d="M2.500 1h7L6 6l3.500 5h-7L6 6z" />
          <SnapButton label="Free" d="M2 2h8v8M10 2l-8 9" />
        </div>
        <div className="ml-[2px] flex w-[34px] justify-between">
          <SnapButton label="Component planes" on>
            <path d="M1 1h10v10H1z" fill="#6f6a7a" stroke="#6f6a7a" />
            <circle cx="6" cy="6" r="3" fill="#e89040" stroke="none" />
          </SnapButton>
          <SnapButton label="Object planes" on>
            <path d="M1 1l10 10M11 1L1 11" stroke="#d9863a" strokeWidth="2" />
            <path d="M3.500 3.500h5v5h-5z" fill="#55525f" stroke="#55525f" />
          </SnapButton>
        </div>
        <Drop label="Snap depth" value="Auto" className="ml-[6px] w-[41px]" />
        <Drop label="Plane type" value="View plane" className="ml-[7px] w-[65px]" />
        <Drop label="Outline planes" value="Outline planes" className="ml-[7px] w-[80px]" />
        <button type="button" aria-label="Visibility" className="ml-[8px] p-[3px]">
          <FaEye className="h-[8px] w-[10px]" />
        </button>
      </div>
    </div>
  );
}

export default function App() {
  return (
    <div className='relative flex h-screen flex-col overflow-hidden bg-[#f6f1fc] font-["Open_Sans","Liberation_Sans",sans-serif]'>
      <Ribbon />
      <main className="flex min-h-0 flex-1">
        <div className="min-w-0 flex-1 overflow-hidden">
          <ModelView />
        </div>
        <SidePane />
      </main>
      <SnapBar />
      <footer className="flex h-[21px] shrink-0 items-center border-b border-[#2a2b33] bg-[#0061a7] pl-[969px] text-[12px] whitespace-nowrap text-[#e8f1f9]">
        <span className="w-[25px]">O</span>
        <span className="w-[11px]">S</span>
        <span className="w-[48px]">D</span>
        <span className="w-[52px]">0 Pan</span>
        <span className="w-[177px]">Current phase: 1, Phase 1</span>
        <span>1 objects and 0 handles selected</span>
      </footer>
      <svg viewBox="0 0 44 8" className="pointer-events-none absolute top-[36px] left-[936px] h-[8px] w-[44px] fill-[#e01c24]">
        <path d="M1 5l4-3 2 2-4 3zM38 3l2-2 3 3-2 2z" />
      </svg>
      <ConnectionDialog />
    </div>
  );
}
